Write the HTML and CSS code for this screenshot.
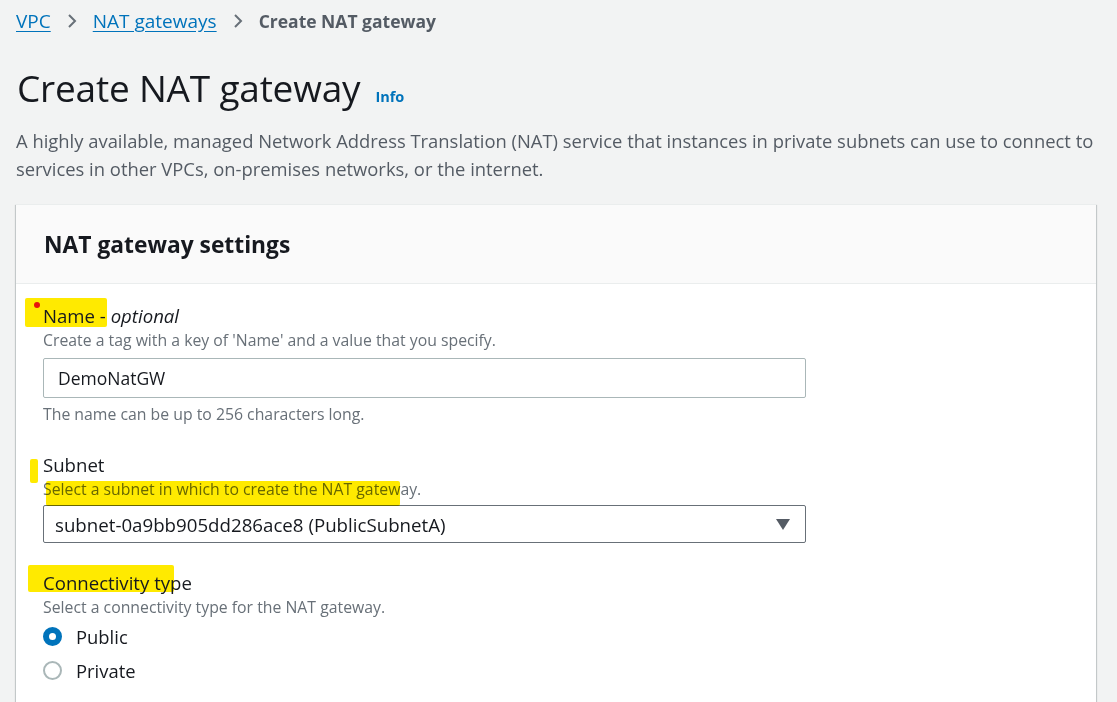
FILE: index.html
```html
<!DOCTYPE html>
<html>
<head>
<meta charset="utf-8">
<link rel="stylesheet" href="styles.css">
</head>
<body>
<div class="page">
  <nav class="crumbs">
    <a class="crumb-link" href="#">VPC</a>
    <svg class="chev" viewBox="0 0 12 16" width="12" height="16"><path d="M3 2 L9 8 L3 14" fill="none" stroke="#687078" stroke-width="2"/></svg>
    <a class="crumb-link" href="#">NAT gateways</a>
    <svg class="chev" viewBox="0 0 12 16" width="12" height="16"><path d="M3 2 L9 8 L3 14" fill="none" stroke="#687078" stroke-width="2"/></svg>
    <span class="crumb-current">Create NAT gateway</span>
  </nav>
  <div class="title-row">
    <h1 class="title">Create NAT gateway</h1>
    <a class="info" href="#">Info</a>
  </div>
  <p class="desc">A highly available, managed Network Address Translation (NAT) service that instances in private subnets can use to connect to services in other VPCs, on-premises networks, or the internet.</p>

  <section class="card">
    <header class="card-head">
      <h2 class="card-title">NAT gateway settings</h2>
    </header>
    <div class="card-body">
      <span class="hl hl-name"></span>
      <span class="red-dot"></span>
      <span class="hl hl-subnet-bar"></span>
      <span class="hl hl-subnet-desc"></span>
      <span class="hl hl-conn"></span>

      <div class="field">
        <div class="label">Name - <i>optional</i></div>
        <div class="hint">Create a tag with a key of 'Name' and a value that you specify.</div>
        <div class="input">DemoNatGW</div>
        <div class="constraint">The name can be up to 256 characters long.</div>
      </div>

      <div class="field field-subnet">
        <div class="label">Subnet</div>
        <div class="hint">Select a subnet in which to create the NAT gateway.</div>
        <div class="select">
          <span>subnet-0a9bb905dd286ace8 (PublicSubnetA)</span>
          <svg class="caret" viewBox="0 0 14 12" width="14" height="12"><path d="M0 1 H14 L7 12 Z" fill="#545b64"/></svg>
        </div>
      </div>

      <div class="field field-conn">
        <div class="label">Connectivity type</div>
        <div class="hint">Select a connectivity type for the NAT gateway.</div>
        <div class="radio-row"><span class="radio checked"></span><span class="radio-label">Public</span></div>
        <div class="radio-row"><span class="radio"></span><span class="radio-label">Private</span></div>
      </div>
    </div>
  </section>
</div>
</body>
</html>
```
FILE: styles.css
```css
html, body {
  margin: 0;
  padding: 0;
  background: #f2f3f3;
  font-family: "Open Sans", "Noto Sans", Arial, sans-serif;
  color: #16191f;
  overflow: hidden;
}
.page {
  padding: 0 21px 0 16px;
  height: 702px;
}
.crumbs {
  height: 42px;
  display: flex;
  align-items: center;
  font-size: 19px;
}
.crumb-link {
  color: #0073bb;
  text-decoration: underline;
  text-underline-offset: 3px;
}
.chev {
  margin: 0 15px 0 15px;
}
.crumb-current {
  color: #545b64;
  font-weight: 700;
  font-size: 17.5px;
}
.title-row {
  display: flex;
  align-items: baseline;
  margin-top: 23px;
  height: 46px;
}
.title {
  margin: 0;
  font-size: 37px;
  font-weight: 400;
  line-height: 46px;
  padding-left: 1px;
  letter-spacing: -0.2px;
}
.info {
  margin-left: 15px;
  font-size: 14.5px;
  font-weight: 700;
  color: #0073bb;
  text-decoration: none;
}
.desc {
  margin: 16px 0 0 0;
  font-size: 18.4px;
  line-height: 28px;
  color: #545b64;
}
.card {
  margin-top: 21px;
  background: #fff;
  box-shadow: 0 1px 1px 0 rgba(0,28,36,0.3), 1px 1px 1px 0 rgba(0,28,36,0.15), -1px 1px 1px 0 rgba(0,28,36,0.15);
  border-top: 1px solid #eaeded;
  height: 520px;
}
.card-head {
  background: #fafafa;
  height: 78px;
  border-bottom: 1px solid #eaeded;
  display: flex;
  align-items: center;
  padding-left: 28px;
}
.card-title {
  margin: 0;
  font-size: 22.8px;
  font-weight: 700;
  color: #16191f;
}
.card-body {
  position: relative;
  padding: 20px 27px 0 27px;
}
.field {
  width: 763px;
}
.label {
  font-size: 18.6px;
  line-height: 24px;
  position: relative;
}
.label i {
  font-style: italic;
}
.hint, .constraint {
  font-size: 15.8px;
  line-height: 24px;
  color: #687078;
}
.input {
  margin-top: 6px;
  height: 38px;
  border: 1px solid #aab7b8;
  border-radius: 2px;
  background: #fff;
  font-size: 17.5px;
  line-height: 38px;
  padding-left: 14px;
}
.constraint {
  margin-top: 4px;
}
.field-subnet {
  margin-top: 27px;
}
.select {
  margin-top: 4px;
  height: 36px;
  border: 1px solid #687078;
  border-radius: 2px;
  display: flex;
  align-items: center;
  justify-content: space-between;
  padding: 0 15px 0 11px;
  font-size: 18.7px;
}
.caret {
  display: block;
}
.field-conn {
  margin-top: 28px;
}
.radio-row {
  display: flex;
  align-items: center;
  height: 34px;
}
.radio {
  width: 15px;
  height: 15px;
  border: 2px solid #aab7b8;
  border-radius: 50%;
  box-sizing: content-box;
  background: #fff;
}
.radio.checked {
  width: 7px;
  height: 7px;
  border: 6px solid #0073bb;
}
.radio-label {
  margin-left: 14px;
  font-size: 18.4px;
}
.hl {
  position: absolute;
  background: #ffea00;
  mix-blend-mode: multiply;
  border-radius: 2px;
}
.hl-name { left: 9px; top: 14px; width: 82px; height: 29px; }
.hl-subnet-bar { left: 14px; top: 175px; width: 8px; height: 24px; }
.hl-subnet-desc { left: 30px; top: 197px; width: 354px; height: 25px; }
.hl-conn { left: 12px; top: 281px; width: 146px; height: 27px; }
.red-dot {
  position: absolute;
  left: 18px;
  top: 18px;
  width: 6px;
  height: 6px;
  border-radius: 50%;
  background: #e8140c;
}
```
